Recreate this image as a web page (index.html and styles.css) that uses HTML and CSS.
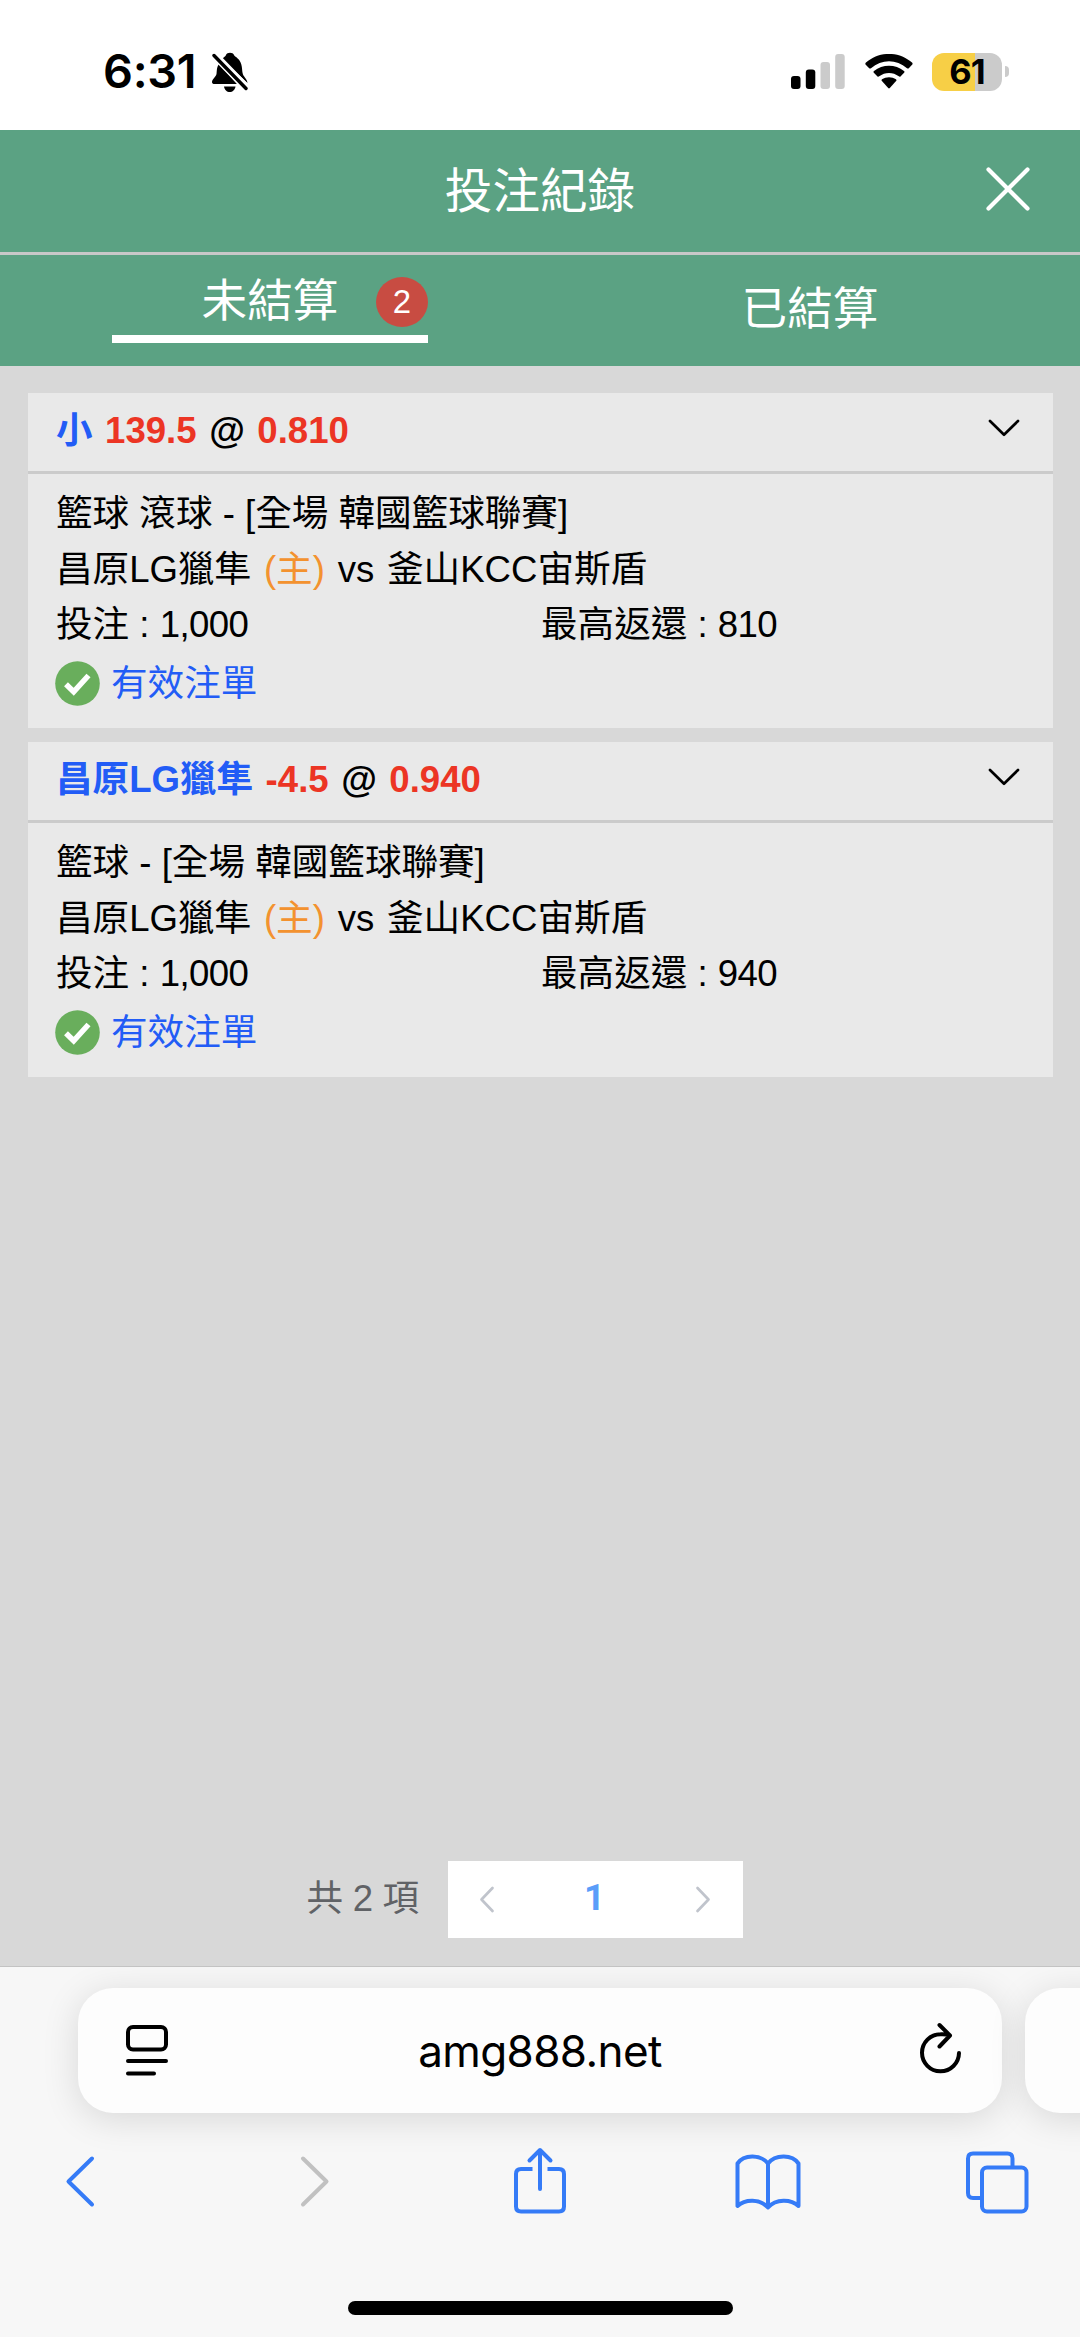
FILE: index.html
```html
<!DOCTYPE html>
<html lang="zh-Hant">
<head>
<meta charset="utf-8">
<title>投注紀錄</title>
<link rel="stylesheet" href="styles.css">
</head>
<body>
<div class="status-bar">
  <div class="clock">
    <span class="time">6:31</span>
    <svg class="bell" width="38" height="42" viewBox="0 0 38 42">
      <path d="M8 13C5.500 16 6 20 5.500 23C5 26 1 28 1 31C1 32.500 2 33 3.500 33H26Z"/>
      <path d="M11 8C13 6 14.500 5.500 15 4C16 1 22 1 23 4C23.500 5.500 26 6 28.500 9.500C32 15 30.500 20 32 23.500C33 26 36 28 36.500 32Z"/>
      <path d="M13 35.500H24.500C24 39 21.500 41 18.700 41S13.500 39 13 35.500Z"/>
      <path class="slash" d="M3 4.500L35 37.500"/>
    </svg>
  </div>
  <div class="indicators">
    <svg width="54" height="36" viewBox="0 0 54 36">
      <rect x="0" y="22" width="9.500" height="13" rx="3"/>
      <rect x="14.800" y="15.500" width="9.500" height="19.500" rx="3"/>
      <rect class="dim" x="29.500" y="8" width="9.500" height="27" rx="3"/>
      <rect class="dim" x="44.200" y="0" width="9.500" height="35" rx="3"/>
    </svg>
    <svg class="wifi" width="48" height="36" viewBox="0 0 48 36">
      <path d="M0.500 10.500Q0 9.500 1 8.600C14-3 34-3 47 8.600Q48 9.500 47.300 10.500L43.800 14.200Q43 14.900 42 14.200C31.500 5 16.500 5 6 14.200Q5 14.900 4.200 14.200Z"/>
      <path d="M8.600 18.500Q8 17.800 9 17C17.500 10 30.500 10 39 17Q40 17.800 39.300 18.500L35.500 22.400Q34.700 23 33.800 22.300C28 17.800 20 17.800 14.200 22.300Q13.300 23 12.500 22.400Z"/>
      <path d="M16.700 26.700Q16.200 26 17 25.300C21 22.400 27 22.400 31 25.300Q31.800 26 31.300 26.700L24.800 34Q24 34.800 23.200 34Z"/>
    </svg>
    <div class="battery"><span>61</span></div>
  </div>
</div>

<header class="page-header">
  <h1>投注紀錄</h1>
  <svg class="close" width="44" height="44" viewBox="0 0 44 44"><path d="M2.500 2.500L41.500 41.500M41.500 2.500L2.500 41.500"/></svg>
</header>
<nav class="tabs">
  <div class="tab"><div class="tab-label active">未結算<span class="badge">2</span></div></div>
  <div class="tab"><div class="tab-label">已結算</div></div>
</nav>

<main>
  <section class="bet">
    <div class="bet-head">
      <span class="pick">小</span><span class="odds">139.5</span><span>@</span><span class="odds">0.810</span>
      <svg class="chevron" width="32" height="18" viewBox="0 0 32 18"><path d="M2 2L16 15.700L30 2"/></svg>
    </div>
    <div class="bet-body">
      <div class="line">籃球 滾球 - [全場 韓國籃球聯賽]</div>
      <div class="line match"><span>昌原LG獵隼</span><span class="home">(主)</span><span>vs</span><span>釜山KCC宙斯盾</span></div>
      <div class="line stakes"><span>投注 : <span class="amount">1,000</span></span><span>最高返還 : <span class="amount">810</span></span></div>
      <div class="state">
        <svg width="45" height="45" viewBox="0 0 45 45"><circle cx="22.500" cy="22.500" r="22.300"/><path d="M11 23.200L18.700 30.800L33.500 14.500"/></svg>
        <span class="state-label">有效注單</span>
      </div>
    </div>
  </section>
  <section class="bet">
    <div class="bet-head">
      <span class="pick">昌原LG獵隼</span><span class="odds">-4.5</span><span>@</span><span class="odds">0.940</span>
      <svg class="chevron" width="32" height="18" viewBox="0 0 32 18"><path d="M2 2L16 15.700L30 2"/></svg>
    </div>
    <div class="bet-body">
      <div class="line">籃球 - [全場 韓國籃球聯賽]</div>
      <div class="line match"><span>昌原LG獵隼</span><span class="home">(主)</span><span>vs</span><span>釜山KCC宙斯盾</span></div>
      <div class="line stakes"><span>投注 : <span class="amount">1,000</span></span><span>最高返還 : <span class="amount">940</span></span></div>
      <div class="state">
        <svg width="45" height="45" viewBox="0 0 45 45"><circle cx="22.500" cy="22.500" r="22.300"/><path d="M11 23.200L18.700 30.800L33.500 14.500"/></svg>
        <span class="state-label">有效注單</span>
      </div>
    </div>
  </section>
  <div class="pagination">
    <span class="total">共 2 項</span>
    <div class="pager">
      <svg width="16" height="28" viewBox="0 0 16 28"><path d="M13.500 2L2.500 13.500L13.500 25"/></svg>
      <span class="current">1</span>
      <svg width="16" height="28" viewBox="0 0 16 28"><path d="M2.500 2L13.500 13.500L2.500 25"/></svg>
    </div>
  </div>
</main>

<footer class="browser">
  <div class="address-row">
    <div class="address">
      <svg width="42" height="52" viewBox="0 0 42 52"><rect x="2" y="2" width="38" height="22.500" rx="5"/><path d="M2 36H40M2 48.500H28"/></svg>
      <span class="url">amg888.net</span>
      <svg width="42" height="52" viewBox="0 0 42 52"><path d="M39 31A18.500 18.500 0 1 1 20.500 12.300Q26 12 30 13.500M19.500 3L30 13.500L19.500 24.500"/></svg>
    </div>
    <div class="next-tab"></div>
  </div>
  <div class="toolbar">
    <svg width="30" height="68" viewBox="0 0 30 68"><path d="M27 11.500L3.500 34.500L27 57.500"/></svg>
    <svg class="forward" width="30" height="68" viewBox="0 0 30 68"><path d="M3 11.500L26.500 34.500L3 57.500"/></svg>
    <svg class="share" width="54" height="68" viewBox="0 0 54 68"><path class="butt" d="M19.500 22H8Q3 22 3 27V59.500Q3 64.500 8 64.500H46Q51 64.500 51 59.500V27Q51 22 46 22H34.500"/><path d="M27 42V3.500M16.500 13.500L27 3L37.500 13.500"/></svg>
    <svg class="bookmarks" width="66" height="68" viewBox="0 0 66 68"><path d="M33 60.500C25 51.500 10 52 2.500 59V16.500C9 7 26 7.500 33 16.500C40 7.500 57 7 63.500 16.500V59C56 52 41 51.500 33 60.500V16.500"/></svg>
    <svg class="all-tabs" width="64" height="68" viewBox="0 0 64 68"><rect x="17" y="20.500" width="44.500" height="44" rx="5"/><path class="butt" d="M47.500 20V11.500Q47.500 6.500 42.500 6.500H8Q3 6.500 3 11.500V46Q3 51 8 51H16"/></svg>
  </div>
  <div class="home-indicator"></div>
</footer>
</body>
</html>
```
FILE: styles.css
```css
* { box-sizing: border-box; }

body {
  margin: 0;
  width: 1080px;
  height: 2337px;
  display: flex;
  flex-direction: column;
  overflow: hidden;
  background: #d8d8d8;
  color: #000;
  font-family: "Liberation Sans", "Noto Sans CJK TC", sans-serif;
  font-size: 36.6px;
}

svg { display: block; flex: none; }
path, rect { stroke-linejoin: round; }

/* Status bar */
.status-bar {
  flex: none;
  height: 130px;
  background: #fff;
  display: flex;
  justify-content: space-between;
  align-items: flex-start;
  padding: 51px 78px 0 103px;
  font-family: Inter, sans-serif;
}
.clock { display: flex; align-items: center; gap: 15px; height: 42px; }
.time { width: 93px; margin-top: -2px; font-size: 46.8px; font-weight: 600; letter-spacing: -0.3px; white-space: nowrap; }
.bell { overflow: visible; }
.bell .slash { stroke: #000; stroke-width: 3.4; stroke-linecap: round; filter: drop-shadow(2px -2px 0 #fff) drop-shadow(-1px 1px 0 #fff); }
.indicators { display: flex; align-items: center; height: 41px; }
.dim { fill: #cbcbcb; }
.wifi { margin-left: 20px; }
.battery {
  position: relative;
  margin-left: 19px;
  width: 70px;
  height: 38px;
  border-radius: 12px;
  background: linear-gradient(90deg, #f7cf46 61%, #cbcbcb 61%);
  text-align: center;
  font-size: 34.5px;
  line-height: 38px;
  font-weight: 700;
  letter-spacing: -1px;
}
.battery::after {
  content: "";
  position: absolute;
  left: 73px;
  top: 13.500px;
  width: 4px;
  height: 11px;
  border-radius: 0 5px 5px 0;
  background: #cbcbcb;
}

/* Header and tabs */
.page-header {
  flex: none;
  height: 125px;
  border-bottom: 3px solid #c8c8c8;
  background: #5ba283;
  display: grid;
  grid-template-columns: 1fr auto 1fr;
  align-items: center;
  padding: 0 50px;
  color: #fff;
}
.page-header h1 { grid-column: 2; margin: 2px 0 0; font-size: 47.6px; line-height: 60px; font-weight: 400; }
.close { justify-self: end; margin-top: -5px; }
.close path { stroke: #fff; stroke-width: 4.2; stroke-linecap: round; }
.tabs { flex: none; height: 110.500px; display: flex; background: #5ba283; color: #fff; font-size: 45.600px; }
.tab { flex: 1; padding: 0 112px; display: flex; align-items: center; justify-content: center; }
.tab-label { position: relative; height: 68px; line-height: 68px; text-align: center; }
.tab-label.active { width: 316px; height: 69px; line-height: 56px; border-bottom: 8px solid #fff; align-self: flex-start; margin-top: 19px; }
.badge {
  position: absolute;
  right: 0;
  top: 2.500px;
  width: 52px;
  height: 50px;
  border-radius: 50%;
  background: #c84c42;
  font-size: 33px;
  line-height: 50px;
}

/* Bet cards */
main { flex: 1; display: flex; flex-direction: column; gap: 14px; padding: 27.500px 27.500px 28px; min-height: 0; }
.bet { flex: none; height: 335px; background: #e9e9e9; }
.bet-head {
  height: 80.500px;
  border-bottom: 3px solid #cbcbcb;
  display: flex;
  gap: 12.500px;
  padding: 0 32.500px 0 28.500px;
  line-height: 75.500px;
  font-weight: 700;
}
.pick { color: #225cf6; }
.odds { color: #ec3524; }
.chevron { margin: 26px 0 0 auto; }
.chevron path { fill: none; stroke: #000; stroke-width: 2.7; stroke-linecap: round; }
.bet-body { padding: 12.800px 28.500px 0; }
.line { height: 55.400px; line-height: 55.400px; white-space: nowrap; }
.match { display: flex; gap: 12.800px; }
.home { color: #f3922f; }
.stakes { display: grid; grid-template-columns: 1fr 1fr; }
.stakes > span:last-child { padding-left: 1px; }
.amount { letter-spacing: -0.6px; }
.state { height: 63px; display: flex; align-items: center; gap: 11px; margin-left: -1px; color: #225cf6; }
.state-label { line-height: 56px; }
.state circle { fill: #69ae5c; }
.state path { fill: none; stroke: #fff; stroke-width: 5.5; stroke-linejoin: miter; }

/* Pagination */
.pagination { margin-top: auto; display: flex; align-items: center; padding-left: 279px; color: #606266; }
.total { width: 141px; line-height: 60px; padding-bottom: 2px; letter-spacing: -0.3px; }
.pager { width: 295px; height: 77px; background: #fff; display: flex; align-items: center; justify-content: space-between; padding: 0 32px 0 31px; }
.pager path { fill: none; stroke: #c0c4cc; stroke-width: 2.7; stroke-linecap: round; }
.current { color: #5a9df9; font-family: Roboto, sans-serif; font-weight: 700; line-height: 60px; padding-bottom: 3px; }

/* Browser chrome */
.browser { flex: none; height: 371px; border-top: 1px solid #c3c3c3; background: #f7f7f7; overflow: hidden; }
.browser path, .browser rect { fill: none; stroke-linecap: round; stroke-width: 4; }
.address-row { display: flex; gap: 23px; padding: 21px 0 0 77.500px; }
.address, .next-tab { height: 125px; border-radius: 35px; background: #fdfdfd; box-shadow: 0 6px 36px rgba(0, 0, 0, 0.13); }
.address { flex: none; width: 924.500px; display: flex; justify-content: space-between; align-items: center; padding: 0 40px 0 48.500px; stroke: #000; }
.address svg:last-child { margin-top: -6px; }
.url { margin-left: -8px; stroke: none; font: 400 44px/60px Inter, sans-serif; letter-spacing: -0.6px; }
.next-tab { flex: none; width: 120px; }
.toolbar { display: flex; padding: 34px 0 0 65px; stroke: #357bf7; }
.toolbar .forward { margin-left: 205px; stroke: #c1c1c1; }
.share { margin-left: 183px; }
.bookmarks { margin-left: 168px; }
.all-tabs { margin-left: 164px; }
.browser .butt { stroke-linecap: butt; }
.home-indicator { width: 385px; height: 14px; margin: 86px auto 0; border-radius: 7px; background: #000; }
```
